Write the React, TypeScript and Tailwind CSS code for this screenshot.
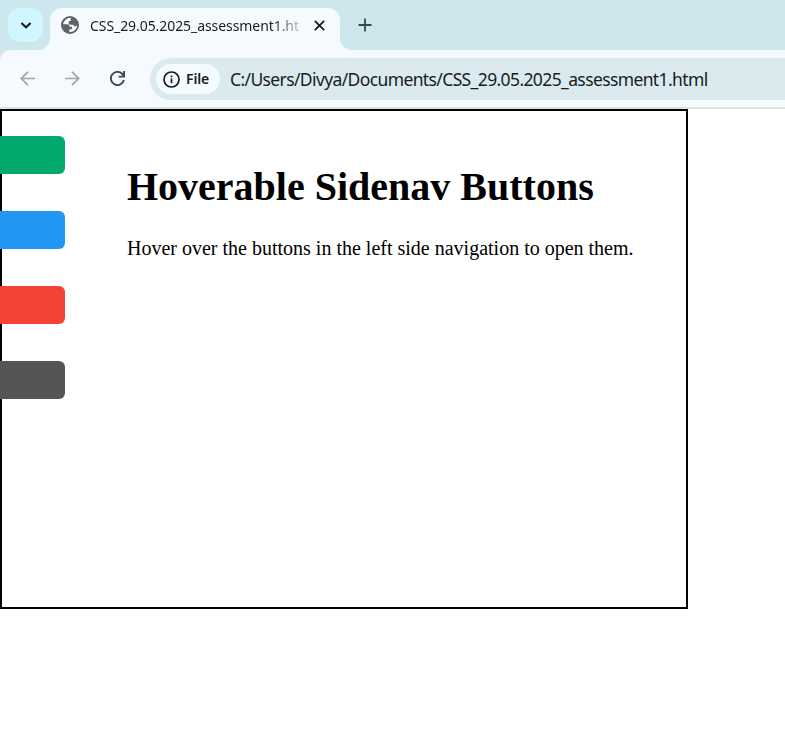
import React from "react";

const buttons = [
  { name: "about", color: "bg-[#04aa6d]" },
  { name: "blog", color: "bg-[#2196f3]" },
  { name: "projects", color: "bg-[#f44336]" },
  { name: "contact", color: "bg-[#555555]" },
];

function Globe() {
  return (
    <svg className="mt-[8.5px] ml-[11px] size-[18px] shrink-0" viewBox="0 0 18 18">
      <circle cx="9" cy="9" r="9" fill="#5f6368" />
      <path
        d="M9.8 1.9C7.7 1.7 5.3 2.7 4.2 4.2C3 5.5 2.2 7 2.1 8.3H6.2C7.6 8.3 8.5 9 8.5 10V10.8H11V12.3C11 13 10.5 13.4 9.7 13.4H8.2V15.8C12.5 16.4 16 13.4 16 9.5C15.3 10 14.7 10.2 14 10.2C12.9 10.2 12.4 9.6 12.4 8.7H9.3C8.3 8.7 7.7 8 7.7 7.1V6.2C7.7 5.4 8.2 5 9 5H9.8Z"
        fill="#f4fafd"
      />
    </svg>
  );
}

function TabStrip() {
  return (
    <div className="flex h-[50px] bg-[#cde7ec]">
      <div className="mt-2 ml-2 flex h-[34px] w-[35px] shrink-0 items-center justify-center rounded-xl bg-[#d0f6ff]">
        <svg className="size-3" viewBox="0 0 12 12" fill="none" stroke="#111b1e" strokeWidth="2">
          <path d="M1.4 4 6 8.3 10.6 4" />
        </svg>
      </div>
      <div className="-ml-[5px] h-3 w-3 shrink-0 self-end bg-[#f4fafd]">
        <div className="h-3 w-3 rounded-br-xl bg-[#cde7ec]" />
      </div>
      <div className="mt-[7.5px] flex w-[290px] shrink-0 rounded-t-xl bg-[#f4fafd]">
        <Globe />
        <div className="mt-[8px] ml-[11px] h-[22px] w-[210px] bg-linear-to-r from-[#161d1f] from-87% to-[#161d1f]/20 bg-clip-text font-['Noto_Sans',sans-serif] text-[14px] leading-[20px] tracking-[-0.07px] whitespace-nowrap text-transparent">
          CSS_29.05.2025_assessment1.ht
        </div>
        <svg className="mt-[12px] ml-[14px] size-[11px] shrink-0" viewBox="0 0 11 11" stroke="#161d1f" strokeWidth="1.8">
          <path d="M.8.8 10.2 10.2M10.2.8.8 10.2" />
        </svg>
      </div>
      <div className="h-3 w-3 shrink-0 self-end bg-[#f4fafd]">
        <div className="h-3 w-3 rounded-bl-xl bg-[#cde7ec]" />
      </div>
      <svg className="mt-[18px] ml-[6px] size-[14px]" viewBox="0 0 14 14" stroke="#334b4f" strokeWidth="1.8">
        <path d="M7 .5V13.5M.5 7H13.5" />
      </svg>
    </div>
  );
}

function Toolbar() {
  return (
    <div className="bg-[#cde7ec]">
      <div className="flex h-[59px] rounded-tl-[10px] border-b-2 border-[#dbe5e7] bg-[#f4fafd]">
        <svg className="mt-[21px] ml-5 size-[15px] shrink-0" viewBox="0 0 15 15" fill="none" stroke="#9fa5a7" strokeWidth="1.7">
          <path d="M15 7.5H1.5M8 .8 1.3 7.5 8 14.2" />
        </svg>
        <svg className="mt-[21px] ml-[30px] size-[15px] shrink-0" viewBox="0 0 15 15" fill="none" stroke="#9fa5a7" strokeWidth="1.7">
          <path d="M0 7.5H13.5M7 .8 13.7 7.5 7 14.2" />
        </svg>
        <svg className="mt-[21px] ml-[30px] size-[15px] shrink-0" viewBox="0 0 15 15" fill="none" stroke="#334b4f" strokeWidth="1.9">
          <path d="M13.9 9A6.6 6.6 0 1 1 12.5 3.2L14 5.2M14.1 0V5.6H8.7" />
        </svg>
        <div className="mt-2 ml-[25px] flex h-[42px] flex-1 items-center rounded-l-full bg-[#dbeaef]">
          <div className="ml-[6px] flex h-[30px] w-16 items-center rounded-full bg-[#f4fafd]">
            <svg className="ml-[7px] size-[17px]" viewBox="0 0 17 17" fill="none" stroke="#161d1f" strokeWidth="1.7">
              <circle cx="8.5" cy="8.5" r="7.5" />
              <path d="M8.5 7.5V12.3M8.5 4.5V6.2" />
            </svg>
            <span className="ml-[6px] font-['Noto_Sans',sans-serif] text-[14px] leading-[18px] font-semibold tracking-[-0.15px] text-[#161d1f]">
              File
            </span>
          </div>
          <span className="ml-[10px] font-['Noto_Sans',sans-serif] text-[17.5px] tracking-[-0.62px] whitespace-nowrap text-[#161d1f]">
            C:/Users/Divya/Documents/CSS_29.05.2025_assessment1.html
          </span>
        </div>
      </div>
    </div>
  );
}

export default function App() {
  return (
    <div className="flex h-[741px] w-[785px] flex-col overflow-hidden bg-white">
      <TabStrip />
      <Toolbar />
      <main className="flex h-[500px] w-[688px] shrink-0 border-2 border-black">
        <nav className="-ml-0.5 flex w-[65px] shrink-0 flex-col gap-[37px] pt-[25px]">
          {buttons.map((b) => (
            <div key={b.name} className={`h-[38px] rounded-r-[6px] ${b.color}`} />
          ))}
        </nav>
        <section className="ml-[62px] font-['Liberation_Serif',serif] whitespace-nowrap text-black">
          <h1 className="mt-[53px] text-[40px] leading-[46px] font-bold">Hoverable Sidenav Buttons</h1>
          <p className="mt-[27px] text-[20px] leading-[23px]">
            Hover over the buttons in the left side navigation to open them.
          </p>
        </section>
      </main>
    </div>
  );
}
